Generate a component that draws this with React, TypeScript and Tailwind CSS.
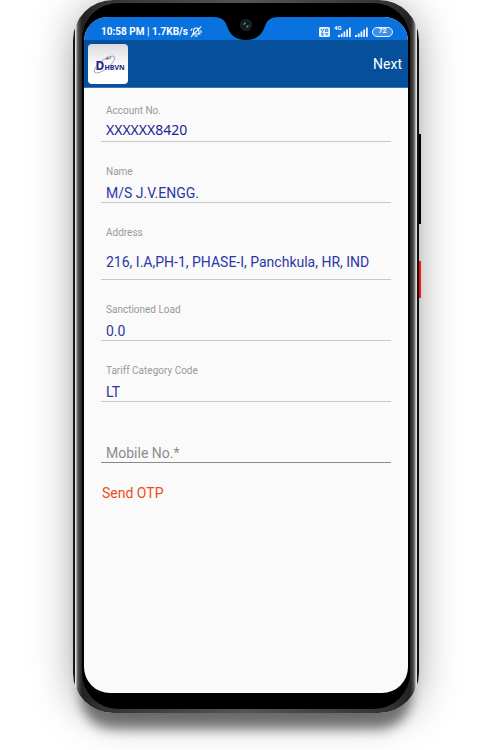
import { useState } from "react";

interface AccountField {
  id: string;
  label: string;
  value: string;
  inputClass: string;
}

const accountFields: AccountField[] = [
  { id: "account", label: "Account No.", value: "XXXXXX8420", inputClass: "h-[18px] pb-0.5 font-['Noto_Sans',sans-serif] text-[#1b2299]" },
  { id: "name", label: "Name", value: "M/S J.V.ENGG.", inputClass: "h-[18px] pt-0.5 text-[#2b36a8]" },
  { id: "address", label: "Address", value: "216, I.A,PH-1, PHASE-I, Panchkula, HR, IND", inputClass: "h-[34px] pt-0.5 text-[#2b36a8]" },
  { id: "load", label: "Sanctioned Load", value: "0.0", inputClass: "h-[18px] pt-0.5 text-[#2b36a8]" },
  { id: "tariff", label: "Tariff Category Code", value: "LT", inputClass: "h-[18px] pt-0.5 text-[#2b36a8]" },
];

function MutedBell() {
  return (
    <svg width="12" height="12" viewBox="0 0 12 12" fill="none" stroke="white" strokeWidth="1.1" strokeLinecap="round" aria-hidden="true">
      <path d="M2.6 8 3.6 6.6V4.8C3.6 3.1 4.7 2 6.2 2S8.8 3.1 8.8 4.8v1.8l1 1.4H3.4" />
      <path d="M5 10h2.4M10.8 .8 1.2 10.6M1 4.4 2 2.8M11 6.6V4.6" />
    </svg>
  );
}

function VolteIcon() {
  return (
    <svg width="11" height="10" viewBox="0 0 11 10" aria-hidden="true">
      <rect width="11" height="10" rx="1.5" fill="#e9f2fc" />
      <path d="M2 2l1.4 2.6L4.8 2M6.3 2.2h2.4v2.2H6.3zM2 6.2h2.2L2.6 8.2h2M6.4 6l1.2 2.2L8.9 6" fill="none" stroke="#0a6fdc" strokeWidth="0.9" />
    </svg>
  );
}

function SignalBars() {
  return (
    <svg width="13" height="10" viewBox="0 0 13 10" fill="#e9f2fc" aria-hidden="true">
      <rect x="0" y="8" width="2" height="2" />
      <rect x="2.8" y="6.5" width="1.8" height="3.5" />
      <rect x="5.5" y="4.5" width="1.8" height="5.5" />
      <rect x="8.2" y="2.5" width="1.8" height="7.5" />
      <rect x="11" y="0.5" width="1.8" height="9.5" />
    </svg>
  );
}

function Notch() {
  return (
    <svg className="absolute left-1/2 top-0 -translate-x-1/2" width="66" height="24" viewBox="0 0 66 24" aria-hidden="true">
      <path d="M0 0C8 0 12 3 14 9C17 18 23 23 33 23S49 18 52 9C54 3 58 0 66 0Z" fill="black" />
      <circle cx="33" cy="8" r="6.2" fill="#1b1d1f" />
      <circle cx="33" cy="8" r="3.2" fill="#101719" />
      <path d="M31 8a2 2 0 0 1 2-2M35 8a2 2 0 0 1-2 2" stroke="#3c8790" strokeWidth="1.3" fill="none" />
    </svg>
  );
}

function Logo() {
  return (
    <div className="flex size-10 items-center justify-center rounded-sm bg-linear-to-b from-[#dcdcdf] to-white to-60%">
      <svg width="40" height="40" viewBox="0 0 40 40" role="img" aria-label="DHBVN">
        <ellipse cx="16.5" cy="20.5" rx="12.5" ry="4.5" transform="rotate(-38 16.5 20.5)" fill="none" stroke="#97a2d0" strokeWidth="0.9" />
        <path d="M17.5 16l2-3.6 1.6 2.6z" fill="#d2502c" />
        <path d="M20.5 15l2.4-2.6v2.2z" fill="#4a8f52" />
        <text x="7.5" y="25.5" fill="#1c2480" fontSize="12" fontWeight="700" fontFamily="Noto Sans, sans-serif">D</text>
        <text x="16.5" y="25.5" fill="#1c2480" fontSize="7" fontWeight="700" fontFamily="Noto Sans, sans-serif">HBVN</text>
      </svg>
    </div>
  );
}

function StatusBar() {
  return (
    <div className="relative flex h-[23px] items-center justify-between bg-[#0a72de] pl-[17px] pr-[15px] pt-1.5 text-white">
      <div className="flex items-center gap-0.5 text-[10px] leading-none font-bold">
        <span>10:58 PM | 1.7KB/s</span>
        <MutedBell />
      </div>
      <div className="flex items-center">
        <VolteIcon />
        <div className="relative ml-1 mr-1 pl-1">
          <span className="absolute left-0 -top-0.5 text-[6px] leading-none font-bold">4G</span>
          <SignalBars />
        </div>
        <SignalBars />
        <span className="ml-1 flex h-[10px] w-[21px] items-center justify-center rounded-full border border-[#e9f2fc] bg-[#3f90e6] text-[7px] leading-none font-bold">
          72
        </span>
      </div>
      <Notch />
    </div>
  );
}

export default function App() {
  const [mobile, setMobile] = useState("");

  return (
    <div className="flex min-h-screen flex-col overflow-hidden bg-white px-[73px] pb-[37px] font-[Roboto,sans-serif]">
      {/* Phone body: metal edge, then black bezel, then the screen */}
      <div className="relative flex flex-1 flex-col rounded-[40px] bg-[linear-gradient(90deg,#161616_0_2px,#dedede_2px_3px,#777_4px,#444_6px,#222_9px,#333_30px,#555_50%,#333_calc(100%-30px),#222_calc(100%-9px),#444_calc(100%-6px),#888_calc(100%-4px),#dedede_calc(100%-3px)_calc(100%-2px),#111_calc(100%-2px))] px-[9px] pt-[3px] pb-1 shadow-[0_24px_12px_-8px_rgba(0,0,0,0.48),0_4px_44px_-4px_rgba(0,0,0,0.42)]">
        <div className="absolute left-full top-[134px] h-[90px] w-0.5 bg-black" />
        <div className="absolute left-full top-[261px] h-[37px] w-0.5 bg-[#ff1418]" />

        <div className="flex flex-1 flex-col rounded-[36px] bg-black px-0.5 pt-3.5 pb-4">
          <div className="flex flex-1 flex-col overflow-hidden rounded-t-3xl rounded-b-[26px] bg-[#fafafa]">
            <StatusBar />

            <header className="flex h-12 items-center justify-between border-b border-[#3c75b5] bg-[#06509b] pl-1 pr-1.5">
              <Logo />
              <button type="button" className="text-sm text-white">Next</button>
            </header>

            <form className="flex flex-col px-[17px] pt-[17px]" onSubmit={e => e.preventDefault()}>
              <div className="flex flex-col gap-6">
                {accountFields.map(field => (
                  <div key={field.id} className="flex flex-col gap-1">
                    <label htmlFor={field.id} className="px-[5px] text-[10px] leading-3 text-[#999]">
                      {field.label}
                    </label>
                    <input
                      id={field.id}
                      readOnly
                      value={field.value}
                      className={`box-content border-b border-[#c8c8c8] bg-transparent px-[5px] text-sm outline-none ${field.inputClass}`}
                    />
                  </div>
                ))}
              </div>

              <input
                type="tel"
                aria-label="Mobile No."
                placeholder="Mobile No.*"
                value={mobile}
                onChange={e => setMobile(e.target.value)}
                className="mt-10 box-content h-[18px] border-b border-[#8a8a8a] bg-transparent px-[5px] pt-0.5 text-sm text-[#2b36a8] outline-none placeholder:text-[#8c8c8c]"
              />
              <button type="submit" className="mt-5 self-start pl-px text-sm text-[#f04a1c]">Send OTP</button>
            </form>
          </div>
        </div>
      </div>
    </div>
  );
}
